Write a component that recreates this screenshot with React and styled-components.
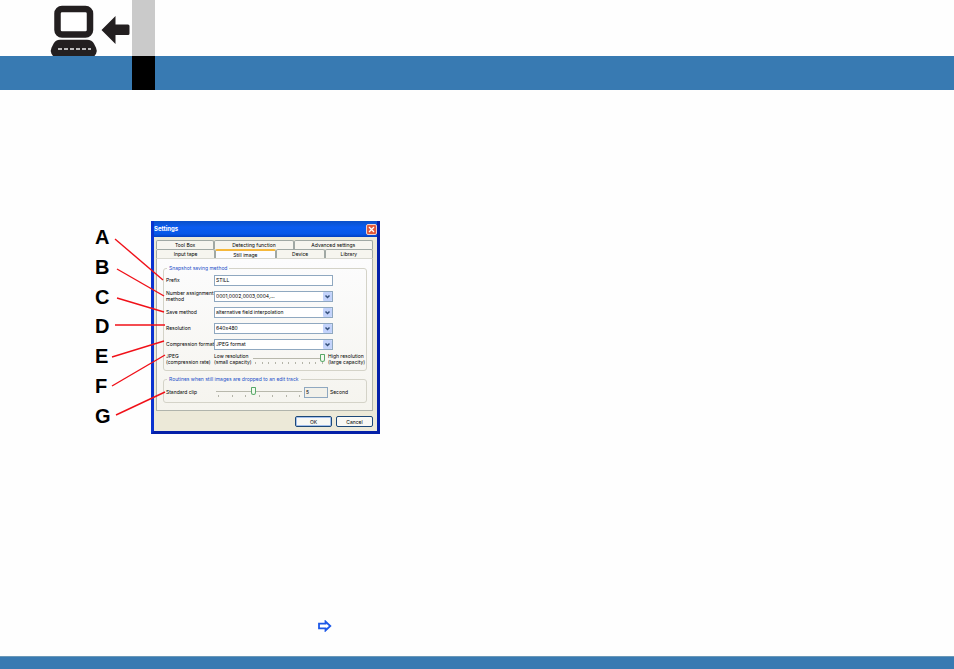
import React from 'react';
import styled, { createGlobalStyle } from 'styled-components';

const GlobalStyle = createGlobalStyle`
    * {
        box-sizing: border-box;
    }
    body {
        margin: 0;
        background: #fefefe;
        font-family: 'Liberation Sans', Arial, sans-serif;
    }
`;

const Page = styled.div`
    min-height: 100vh;
    display: flex;
    flex-direction: column;
`;

const TopStrip = styled.div`
    display: flex;
    height: 56px;
    svg {
        width: 132px;
        height: 56px;
    }
`;

const BlueBar = styled.div`
    height: 34px;
    padding-left: 132px;
    background: #387ab2;
`;

const Block = styled.div`
    width: 23px;
    height: 100%;
    background: ${(props) => props.$color};
`;

const Main = styled.main`
    flex: 1;
    display: flex;
    flex-direction: column;
    justify-content: space-between;
    padding: 131px 0 24px;
`;

const Footer = styled.footer`
    height: 13px;
    background: #387ab2;
    border-top: 1px solid #6a98b8;
`;

const Figure = styled.figure`
    position: relative;
    display: flex;
    margin: 0 0 0 95px;
`;

const Letters = styled.div`
    width: 56px;
    padding: 6px 0 8px;
    display: flex;
    flex-direction: column;
    justify-content: space-between;
    font-size: 20px;
    font-weight: 700;
    line-height: 20px;
`;

const Callouts = styled.svg`
    position: absolute;
    left: 0;
    top: 0;
    width: 80px;
    height: 213px;
    stroke: #f01018;
    stroke-width: 1.4;
    pointer-events: none;
`;

const Dialog = styled.section`
    width: 229px;
    border: 3px solid #0a33d0;
    border-top: 0;
    border-right-color: #0420a8;
    border-bottom-color: #0420a8;
    background: #ece9d8;
    color: #000;
    font-family: Inter, 'Liberation Sans', sans-serif;
    font-size: 5px;
    font-variant-ligatures: none;
    line-height: 6px;
    white-space: nowrap;
`;

const TitleBar = styled.div`
    display: flex;
    align-items: center;
    justify-content: space-between;
    height: 16px;
    background: linear-gradient(#0a50c8, #0a5cf0 40%, #0858e8 80%, #0340c0);
    h1 {
        margin: 0;
        color: #fff;
        font-size: 6px;
        font-weight: 700;
    }
`;

const CloseButton = styled.button`
    width: 11px;
    height: 11px;
    padding: 0;
    display: flex;
    align-items: center;
    justify-content: center;
    border: 1px solid #f0d0c8;
    border-radius: 2px;
    background: #e0583a;
`;

const Content = styled.div`
    padding: 3px 4px 4px 2px;
`;

const TabRow = styled.div`
    display: grid;
    grid-template-columns: ${(props) => props.$columns};
    height: 9px;
`;

const Tab = styled.button`
    padding: 0;
    border: 1px solid #a0a8a4;
    border-bottom: 0;
    border-radius: 2px 2px 0 0;
    background: ${(props) => (props.$active ? '#fcfcfe' : '#f6f5ef')};
    border-top: ${(props) => (props.$active ? '2px solid #f5b83c' : '1px solid #a0a8a4')};
    color: inherit;
    font: inherit;
`;

const Panel = styled.div`
    padding: 5px 5px 7px 6px;
    border: 1px solid #b0b4ac;
    border-top-color: #d8d8d0;
    background: linear-gradient(#fcfcfd, #f5f4ee);
`;

const Group = styled.fieldset`
    min-width: 0;
    margin: 0 0 4px;
    padding: 0 0 ${(props) => props.$bottom} 2px;
    border: 1px solid #d4d3c8;
    border-radius: 3px;
    &:last-child {
        margin-bottom: 0;
    }
    legend {
        margin-left: 1px;
        padding: 0 2px;
        color: #1c50c8;
        line-height: 8px;
    }
`;

const Row = styled.div`
    display: grid;
    grid-template-columns: 48px 119px;
    align-items: center;
    height: 16px;
`;

const TextInput = styled.input`
    width: 100%;
    height: 11px;
    padding: 0 1px;
    border: 1px solid #8fa8c0;
    background: ${(props) => (props.readOnly ? '#f2f1ea' : '#fff')};
    color: inherit;
    font: inherit;
    font-variant-ligatures: none;
`;

const SelectBox = styled.div`
    position: relative;
    height: 11px;
    select {
        display: block;
        width: 100%;
        height: 11px;
        padding: 0 10px 0 1px;
        appearance: none;
        border: 1px solid #8fa8c0;
        border-radius: 0;
        background: #fff;
        color: inherit;
        font: inherit;
        font-variant-ligatures: none;
    }
    svg {
        position: absolute;
        right: 1px;
        top: 1px;
        width: 9px;
        height: 9px;
        pointer-events: none;
    }
`;

const RateRow = styled.div`
    display: grid;
    grid-template-columns: 48px 39px 72px 1fr;
    align-items: center;
    height: 14px;
    span:last-child {
        padding-left: 3px;
    }
`;

const ClipRow = styled.div`
    display: grid;
    grid-template-columns: 48px 86px 24px 1fr;
    column-gap: 2px;
    align-items: center;
    height: 18px;
`;

const SliderBox = styled.div`
    input {
        display: block;
        width: 100%;
        height: 8px;
        margin: 0;
        appearance: none;
        background: linear-gradient(#b8b8ac, #b8b8ac) center / 100% 1px no-repeat;
    }
    input::-webkit-slider-thumb {
        appearance: none;
        width: 5px;
        height: 8px;
        border: 1px solid #58a868;
        border-radius: 1px 1px 3px 3px;
        background: #f4faf0;
    }
`;

const Ticks = styled.div`
    display: flex;
    justify-content: space-between;
    padding: 0 2px;
    i {
        width: 1px;
        height: 2px;
        background: #b4b4a8;
    }
`;

const Actions = styled.div`
    display: flex;
    justify-content: flex-end;
    gap: 4px;
    padding-top: 5px;
`;

const ActionButton = styled.button`
    width: 37px;
    height: 11px;
    padding: 0;
    border: 1px solid #1c4878;
    border-radius: 2px;
    background: #f8f8f4;
    box-shadow: ${(props) => (props.$primary ? 'inset 0 0 0 1px #a4c0ec' : 'none')};
    color: inherit;
    font: inherit;
`;

const NextLink = styled.a`
    display: block;
    width: 14px;
    height: 12px;
    margin-left: 318px;
    svg {
        display: block;
    }
`;

const lines = [
    [20, 18, 68, 59],
    [22, 48, 69, 75],
    [22, 77, 69, 91],
    [20, 104, 70, 104],
    [17, 136, 69, 120],
    [17, 165, 70, 134],
    [21, 194, 70, 171],
];

const Computer = () => (
    <svg viewBox="0 0 132 56" aria-hidden="true">
        <rect x="57.5" y="9" width="32.5" height="25.5" rx="4.5" fill="#fff" stroke="#231f20" strokeWidth="6.5" />
        <path d="M60 39.700h27q5 0 7 4l2 4q1.500 3 0 6l-1.500 2.300H53l-1.500-2.300q-1.500-3 0-6l2-4q2-4 6.500-4z" fill="#231f20" />
        <path d="M58 49h33" stroke="#eee" strokeWidth="1.500" strokeDasharray="4 2" />
        <path d="M101.500 30 115.500 16V24.500H128q1.500 0 1.500 1.500V33.500q0 1.500-1.500 1.500H115.500V44z" fill="#231f20" />
    </svg>
);

const Select = ({ id, value }) => (
    <SelectBox>
        <select id={id} defaultValue={value}>
            <option>{value}</option>
        </select>
        <svg viewBox="0 0 9 9">
            <rect width="9" height="9" rx="1" fill="#c3d3fb" />
            <path d="M2.500 3.500 4.500 5.500 6.500 3.500" fill="none" stroke="#35507c" strokeWidth="1.500" />
        </svg>
    </SelectBox>
);

const Slider = ({ label, value, ticks }) => (
    <SliderBox>
        <input type="range" aria-label={label} defaultValue={value} />
        <Ticks>
            {Array.from({ length: ticks }, (_, i) => (
                <i key={i} />
            ))}
        </Ticks>
    </SliderBox>
);

const App = () => {
    return (
        <Page>
            <GlobalStyle />
            <header>
                <TopStrip>
                    <Computer />
                    <Block $color="#cacaca" />
                </TopStrip>
                <BlueBar>
                    <Block $color="#000" />
                </BlueBar>
            </header>
            <Main>
                <Figure>
                    <Letters>
                        {['A', 'B', 'C', 'D', 'E', 'F', 'G'].map((letter) => (
                            <span key={letter}>{letter}</span>
                        ))}
                    </Letters>
                    <Dialog>
                        <TitleBar>
                            <h1>Settings</h1>
                            <CloseButton aria-label="Close">
                                <svg width="7" height="7" viewBox="0 0 7 7">
                                    <path d="M1 1 6 6M6 1 1 6" stroke="#fff" strokeWidth="1.300" />
                                </svg>
                            </CloseButton>
                        </TitleBar>
                        <Content>
                            <TabRow $columns="58fr 79fr 79fr">
                                <Tab>Tool Box</Tab>
                                <Tab>Detecting function</Tab>
                                <Tab>Advanced settings</Tab>
                            </TabRow>
                            <TabRow $columns="59fr 60fr 49fr 48fr">
                                <Tab>Input tape</Tab>
                                <Tab $active>Still image</Tab>
                                <Tab>Device</Tab>
                                <Tab>Library</Tab>
                            </TabRow>
                            <Panel>
                                <Group $bottom="4px">
                                    <legend>Snapshot saving method</legend>
                                    <Row>
                                        <label htmlFor="prefix">Prefix</label>
                                        <TextInput id="prefix" defaultValue="STILL" />
                                    </Row>
                                    <Row>
                                        <label htmlFor="number">
                                            Number assignment
                                            <br />
                                            method
                                        </label>
                                        <Select id="number" value="0001,0002,0003,0004,..." />
                                    </Row>
                                    <Row>
                                        <label htmlFor="save">Save method</label>
                                        <Select id="save" value="alternative field interpolation" />
                                    </Row>
                                    <Row>
                                        <label htmlFor="resolution">Resolution</label>
                                        <Select id="resolution" value="640x480" />
                                    </Row>
                                    <Row>
                                        <label htmlFor="format">Compression format</label>
                                        <Select id="format" value="JPEG format" />
                                    </Row>
                                    <RateRow>
                                        <span>
                                            JPEG
                                            <br />
                                            (compression rate)
                                        </span>
                                        <span>
                                            Low resolution
                                            <br />
                                            (small capacity)
                                        </span>
                                        <Slider label="JPEG compression rate" value={100} ticks={11} />
                                        <span>
                                            High resolution
                                            <br />
                                            (large capacity)
                                        </span>
                                    </RateRow>
                                </Group>
                                <Group $bottom="1px">
                                    <legend>Routines when still images are dropped to an edit track</legend>
                                    <ClipRow>
                                        <label htmlFor="clip">Standard clip</label>
                                        <Slider label="Standard clip" value={43} ticks={7} />
                                        <TextInput id="clip" readOnly value="5" />
                                        <span>Second</span>
                                    </ClipRow>
                                </Group>
                            </Panel>
                            <Actions>
                                <ActionButton $primary>OK</ActionButton>
                                <ActionButton>Cancel</ActionButton>
                            </Actions>
                        </Content>
                    </Dialog>
                    <Callouts viewBox="0 0 80 213">
                        {lines.map(([x1, y1, x2, y2]) => (
                            <line key={y1} x1={x1} y1={y1} x2={x2} y2={y2} />
                        ))}
                    </Callouts>
                </Figure>
                <NextLink href="#next" aria-label="Next">
                    <svg width="14" height="12" viewBox="0 0 14 12">
                        <path d="M1 3.700h6.500V1.500L12.300 6 7.500 10.500V8.300H1z" fill="#fff" stroke="#1c58e8" strokeWidth="1.800" />
                    </svg>
                </NextLink>
            </Main>
            <Footer />
        </Page>
    );
};

export default App;
